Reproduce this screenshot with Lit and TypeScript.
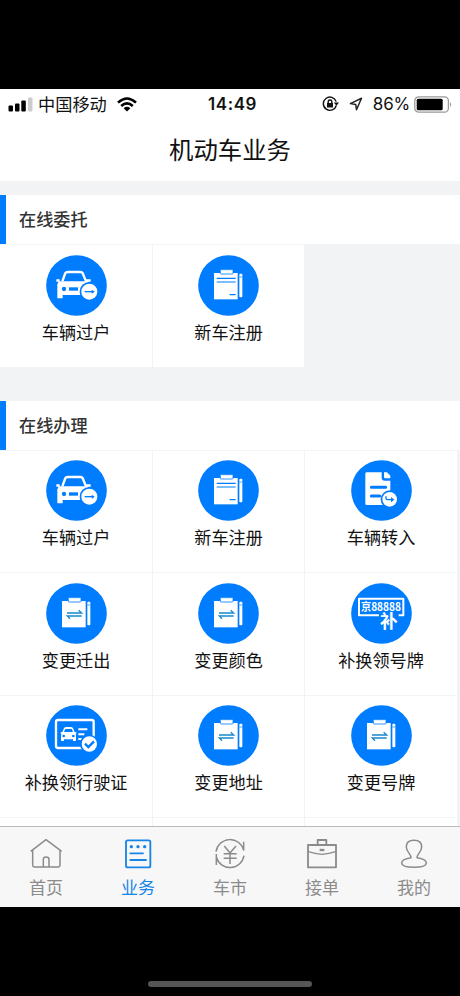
import { LitElement, html, svg, css } from "lit";
import { customElement, property } from "lit/decorators.js";

const BLUE = "#007dff";

const badge = (cx: number, cy: number, r: number) => svg`
  <circle cx=${cx} cy=${cy} r=${r + 5} fill=${BLUE}></circle>
  <circle cx=${cx} cy=${cy} r=${r} fill="#fff"></circle>`;

const board = svg`
  <path d="M48 54H119V133H48Z" fill="#fff"></path>
  <rect x="67" y="46" width="38" height="11" rx="2" fill="#fff" stroke=${BLUE} stroke-width="2.5"></rect>
  <path d="M68 46H104" stroke="#fff" stroke-width="3"></path>
  <rect x="124" y="56" width="9" height="71" rx="3" fill="#fff"></rect>
  <path d="M124 66H133" stroke=${BLUE} stroke-width="2"></path>`;

// Service glyphs, drawn in a 183-unit square around the round background.
const SERVICE_ICONS: Record<string, unknown> = {
  transfer: svg`
    <path d="M49 79L57 57Q59 51 66 51H103Q109 51 111 57L120 79" fill="none" stroke="#fff" stroke-width="7"></path>
    <path d="M31 73H41V79H120V73H134V80H127V100H136V120H50V130H34V88L38 80H31Z" fill="#fff"></path>
    <circle cx="54" cy="102" r="6.5" fill=${BLUE}></circle>
    <rect x="69" y="97" width="27" height="10" fill=${BLUE}></rect>
    ${badge(130, 110, 24)}
    <path d="M116 110H143" stroke=${BLUE} stroke-width="4"></path>
    <path d="M137 104L146 110L137 116Z" fill=${BLUE}></path>`,
  register: svg`
    ${board}
    <path d="M56 70H113M56 81H113M95 119H113" stroke=${BLUE} stroke-width="3.5"></path>`,
  incoming: svg`
    <path d="M43 41Q43 37 47 37H92V53Q92 62 101 62H118V135H47Q43 135 43 131Z" fill="#fff"></path>
    <path d="M99 37H108L118 47V55H103Q99 55 99 51Z" fill="#fff"></path>
    <path d="M61 82H104M61 108H86" stroke=${BLUE} stroke-width="9" stroke-linecap="round"></path>
    ${badge(116, 118, 22)}
    <path d="M105 109V115Q105 119 109 119H124" fill="none" stroke=${BLUE} stroke-width="4"></path>
    <path d="M120 111L130 119L120 127Z" fill=${BLUE}></path>`,
  change: svg`
    ${board}
    <path d="M63 90H107L98 82M107 99H64L72 107" fill="none" stroke="#1689cf" stroke-width="4"></path>`,
  plate: svg`
    <path d="M84 97H24V47H157V97H143" fill="none" stroke="#fff" stroke-width="6" stroke-linejoin="round"></path>
    <text x="30" y="84" font-size="33" textLength="120" lengthAdjust="spacingAndGlyphs" font-weight="700" fill="#fff">京88888</text>
    <text x="87" y="134" font-size="53" font-weight="700" fill="#fff">补</text>`,
  license: svg`
    <rect x="30" y="45" width="113" height="84" rx="6" fill="none" stroke="#fff" stroke-width="7"></rect>
    <path d="M44 82L49 81L54 70Q56 66 61 66H74Q79 66 81 70L86 81L91 82V86H89L90 91V106Q90 108 88 108H83Q81 108 81 106V103H54V106Q54 108 52 108H47Q45 108 45 106V91L47 86H44Z" fill="#fff"></path>
    <path d="M54 81L58 72H77L81 81Z" fill=${BLUE}></path>
    <circle cx="53" cy="93" r="4" fill=${BLUE}></circle><circle cx="82" cy="93" r="4" fill=${BLUE}></circle>
    <path d="M97 73H124M97 88H115M97 102H107" stroke="#fff" stroke-width="6"></path>
    ${badge(130, 117, 23)}
    <path d="M117 116L127 126L144 109" fill="none" stroke=${BLUE} stroke-width="7"></path>`,
};

// Tab glyphs, drawn in a 102-unit square with the current text colour.
const TAB_ICONS: Record<string, unknown> = {
  home: svg`<path d="M5 46L51 11L98 46M11 43V88Q11 93 16 93H88Q93 93 93 88V43M43 92V70Q43 63 51 63Q60 63 60 70V92"></path>`,
  business: svg`<rect x="15" y="13" width="73" height="81" rx="5" stroke-width="5.5"></rect>
    <path d="M28 52H66M28 72H75" stroke-width="5.5" stroke-linecap="round"></path>
    <g fill="currentColor" stroke="none"><circle cx="31" cy="32" r="5"></circle><circle cx="51" cy="32" r="5"></circle><circle cx="71" cy="32" r="5"></circle></g>`,
  market: svg`<path d="M9 47A42.500 42.500 0 0 1 92 42V17M93 59A42.500 42.500 0 0 1 10 63M10 87V54"></path>
    <path d="M34 30L51 51L69 30M32 53H71M32 67H71M51 51V84"></path>`,
  orders: svg`<rect x="9" y="27" width="84" height="67" stroke-width="5.5"></rect>
    <path d="M38 27V12H64V27" stroke-width="5.5"></path><path d="M10 47Q30 54 51 55Q72 54 92 47" stroke-width="3.500"></path><path d="M44 42H58" stroke-width="7"></path>`,
  mine: svg`<path d="M42 65C44 56 28 49 28 33C28 20 37 13 51 13C65 13 74 20 74 33C74 49 58 56 60 65C75 67 88 73 88 81C88 90 72 94 51 94C30 94 14 90 14 81C14 73 27 67 42 65Z"></path>`,
};

@customElement("status-bar")
class StatusBar extends LitElement {
  static styles = css`
    :host { display: grid; grid-template-columns: 1fr auto 1fr; align-items: center; height: 30px; padding: 0 8px; color: #111; font-size: 17px; }
    .side { display: flex; align-items: center; }
    .right { justify-content: flex-end; }
    .carrier { margin: -2px 10px 0 5px; font-size: 17.2px; }
    .time { font: 600 17px Inter, sans-serif; letter-spacing: .6px; margin-left: 5px; }
    .charge { font: 17px Inter, sans-serif; margin: 0 4px 0 10px; letter-spacing: -.2px; }
    .location { margin-left: 9px; }
    svg { display: block; }
    .battery { margin-right: -1px; }
  `;
  render() {
    return html`
      <div class="side">
        <svg width="25" height="16" viewBox="0 0 25 16">
          <rect x="0.5" y="9.5" width="4.5" height="6" rx="1"></rect><rect x="7" y="7.5" width="4.5" height="8" rx="1"></rect>
          <rect x="13.3" y="4.5" width="4.5" height="11" rx="1"></rect><rect x="20" y="1.5" width="4.5" height="14" rx="1" fill="#ccc"></rect>
        </svg>
        <span class="carrier">中国移动</span>
        <svg width="20" height="15" viewBox="0 0 20 15" fill="none" stroke="#000" stroke-width="2.6">
          <path d="M1 5.6Q10-2.6 19 5.6M4.2 9Q10 3.8 15.8 9"></path><path d="M10 14.5L6.6 11.2Q10 8.4 13.4 11.2Z" fill="#000" stroke="none"></path>
        </svg>
      </div>
      <span class="time">14:49</span>
      <div class="side right">
        <svg width="18" height="16" viewBox="0 0 18 16" fill="none" stroke="#111" stroke-width="1.4">
          <path d="M14.3 9.5A6.6 6.6 0 1 1 14.2 5.6"></path><path d="M11.8 6.5H17L14.5 9.8Z" fill="#111" stroke="none"></path>
          <rect x="5" y="7" width="6" height="4.5" fill="#111" stroke="none"></rect><path d="M6.2 7.3V5.6Q6.2 4 8 4Q9.8 4 9.8 5.6V7.3"></path>
        </svg>
        <svg class="location" width="14" height="14" viewBox="0 0 14 14" fill="none" stroke="#222" stroke-width="1.5" stroke-linejoin="round"><path d="M12.5 1.3L1.4 6.6L6.7 7.4L7.5 12.7Z"></path></svg>
        <span class="charge">86%</span>
        <svg class="battery" width="39" height="17" viewBox="0 0 39 17">
          <rect x="0.8" y="0.8" width="33.6" height="15.4" rx="4" fill="none" stroke="#999" stroke-width="1.3"></rect>
          <rect x="2.7" y="2.7" width="26" height="11.6" rx="1.5"></rect><path d="M36 6Q38.4 8.5 36 11Z" fill="#999"></path>
        </svg>
      </div>`;
  }
}

@customElement("service-cell")
class ServiceCell extends LitElement {
  @property() icon = "";
  @property() label = "";
  static styles = css`
    :host { display: flex; flex-direction: column; align-items: center; height: 121.5px; box-sizing: border-box; padding: 9.5px 0 0 .6px; background: #fff; color: #111; }
    svg { display: block; width: 61px; height: 61px; flex: none; }
    .label { font-size: 17.15px; line-height: 24px; margin-top: 4px; white-space: nowrap; }
  `;
  render() {
    return html`<svg viewBox="0 0 183 183"><circle cx="91.5" cy="91.5" r="91" fill=${BLUE}></circle>${SERVICE_ICONS[this.icon]}</svg>
      <span class="label">${this.label}</span>`;
  }
}

type Item = [string, string];

@customElement("service-section")
class ServiceSection extends LitElement {
  @property() heading = "";
  @property({ attribute: false }) items: Item[] = [];
  static styles = css`
    :host { display: block; }
    .heading { display: flex; align-items: center; box-sizing: border-box; height: 49px; border-left: 6px solid #007dff; background: #fff; padding: 0 0 2px 13px; font-size: 17.15px; font-weight: 500; color: #333; }
    .grid { display: grid; grid-template-columns: repeat(3, 151.5px); gap: 1px; padding-top: 1px; }
  `;
  render() {
    return html`<div class="heading">${this.heading}</div>
      <div class="grid">${this.items.map(([icon, label]) => html`<service-cell .icon=${icon} .label=${label}></service-cell>`)}</div>`;
  }
}

@customElement("tab-bar")
class TabBar extends LitElement {
  static styles = css`
    :host { display: grid; grid-template-columns: repeat(5, 1fr); height: 81px; box-sizing: border-box; border-top: 1px solid #bbb; background: #f7f7f8; }
    .tab { display: flex; flex-direction: column; align-items: center; padding-top: 9px; color: #8b8b8b; }
    .active { color: #1585e8; }
    svg { display: block; width: 34px; height: 34px; fill: none; stroke: currentColor; stroke-width: 4.5; stroke-linejoin: round; }
    .label { font-size: 17px; line-height: 24px; margin-top: 5px; }
  `;
  render() {
    const tabs: Item[] = [["home", "首页"], ["business", "业务"], ["market", "车市"], ["orders", "接单"], ["mine", "我的"]];
    return tabs.map(([icon, label]) => html`<div class="tab ${icon === "business" ? "active" : ""}">
      <svg viewBox="0 0 102 102">${TAB_ICONS[icon]}</svg><span class="label">${label}</span></div>`);
  }
}

@customElement("app-root")
class AppRoot extends LitElement {
  static styles = css`
    :host { display: flex; flex-direction: column; box-sizing: border-box; height: 996px; padding-top: 89px; background: #000; font-family: "Noto Sans CJK SC", sans-serif; overflow: hidden; }
    .top { height: 92px; background: #fff; flex: none; }
    .title { text-align: center; font-size: 24.4px; line-height: 36px; margin-top: 12px; color: #111; }
    .content { flex: none; height: 645px; box-sizing: border-box; padding-top: 14px; display: flex; flex-direction: column; gap: 34px; background: #f2f3f5; overflow: hidden; }
    tab-bar { flex: none; }
    .home-area { flex: 1; display: flex; justify-content: center; align-items: flex-end; padding-bottom: 9px; }
    .indicator { width: 164px; height: 6px; border-radius: 3px; background: #555; }
  `;
  render() {
    const delegate: Item[] = [["transfer", "车辆过户"], ["register", "新车注册"]];
    const online: Item[] = [
      ["transfer", "车辆过户"], ["register", "新车注册"], ["incoming", "车辆转入"],
      ["change", "变更迁出"], ["change", "变更颜色"], ["plate", "补换领号牌"],
      ["license", "补换领行驶证"], ["change", "变更地址"], ["change", "变更号牌"],
      ["", ""], ["", ""], ["", ""],
    ];
    return html`
      <div class="top"><status-bar></status-bar><div class="title">机动车业务</div></div>
      <div class="content">
        <service-section .heading=${"在线委托"} .items=${delegate}></service-section>
        <service-section .heading=${"在线办理"} .items=${online}></service-section>
      </div>
      <tab-bar></tab-bar>
      <div class="home-area"><div class="indicator"></div></div>`;
  }
}
